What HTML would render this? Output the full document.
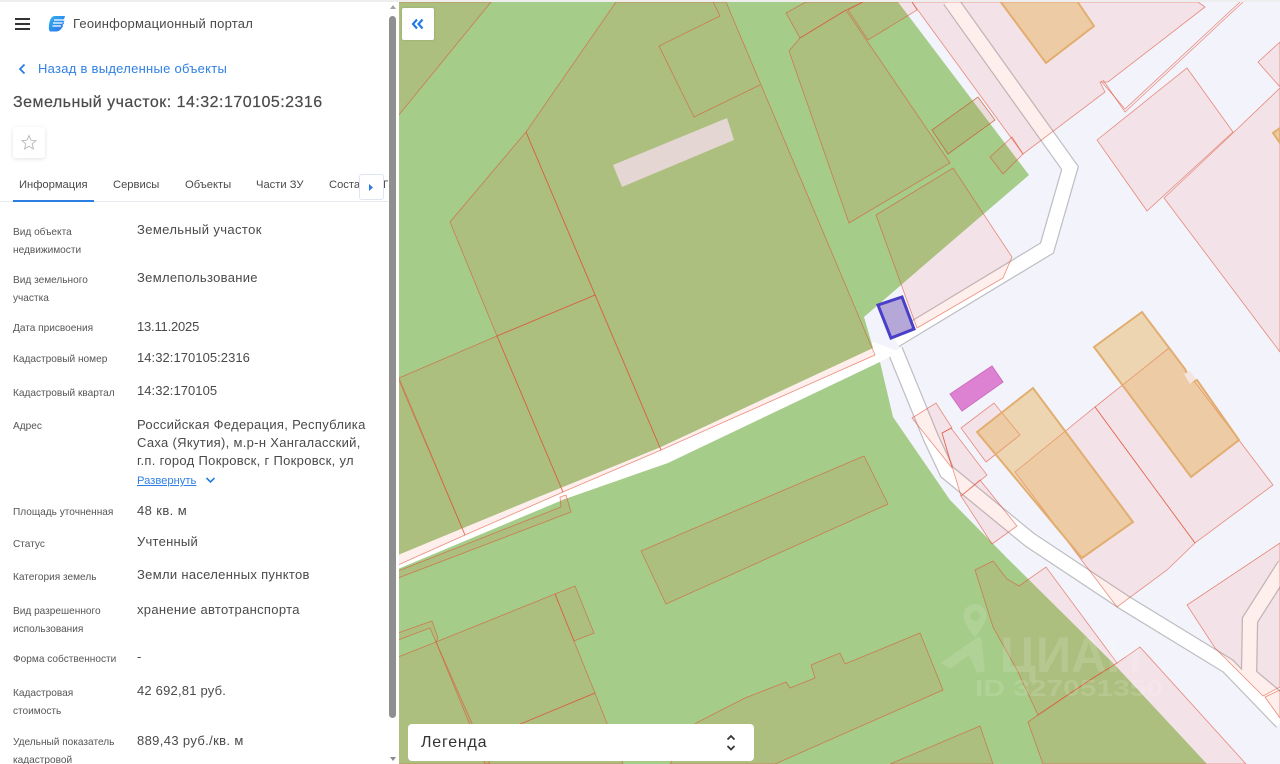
<!DOCTYPE html>
<html lang="ru"><head><meta charset="utf-8"><title>Геоинформационный портал</title>
<style>
html,body{margin:0;padding:0;width:1280px;height:764px;overflow:hidden;background:#fff}
body{font-family:"Liberation Sans","Noto Sans CJK SC",sans-serif;position:relative}
#map{position:absolute;left:0;top:0;filter:blur(.35px)}
#side{position:absolute;left:0;top:0;width:399px;height:764px;background:#fff;overflow:hidden}
#topline{position:absolute;left:0;top:0;width:1280px;height:2px;background:#eeeeee}
.a{position:absolute;white-space:nowrap}
.l{font-size:10.1px;line-height:18px;color:#555;letter-spacing:0;left:13px;margin-top:2px}
.v{font-size:13px;line-height:18px;color:#4a4a4a;letter-spacing:.31px;left:137px;margin-top:1px}
.n{letter-spacing:.05px}
.t{font-size:11.2px;line-height:16px;color:#4a4a4a;top:177px}
</style></head><body>
<svg id="map" width="1280" height="764" viewBox="0 0 1280 764" xmlns="http://www.w3.org/2000/svg">
<rect width="1280" height="764" fill="#f3f3fb"/>
<!-- roads -->
<g fill="none" stroke-linejoin="miter">
<g stroke="#bfbfc4" stroke-width="16.500">
<polyline points="950,0 1070,168 1047,248 895,340"/>
<polyline points="895,350 931,438 947,472 1030,540 1125,603 1228,666 1282,722"/>
<polyline points="1285,565 1250,620 1249,675 1285,705"/>
</g>
<g stroke="#fff" stroke-width="14">
<polyline points="950,0 1070,168 1047,248 895,340"/>
<polyline points="895,350 931,438 947,472 1030,540 1125,603 1228,666 1282,722"/>
<polyline points="1285,565 1250,620 1249,675 1285,705"/>
</g>
</g>
<polygon points="398,548 873,342 900,352 668,463 565,500 398,572" fill="#fff"/>
<!-- green -->
<polygon points="398,2 898,2 1029,175 930,260 864,317 873,348 661,447 531,500 398,555" fill="#a5cc88"/>
<polygon points="398,569 565,499 668,463 880,362 893,417 950,500 1007,558 1113,663 1207,764 398,764" fill="#a5cc88"/>
<!-- parcels -->
<g fill="rgba(240,70,40,.09)" stroke="rgba(224,78,50,.62)" stroke-width=".8" stroke-linejoin="miter">
<polygon points="398,2 491,2 398,116"/>
<polygon points="616,2 726,2 875,355 661,450 526,132"/>
<polyline fill="none" points="713,2 720,16 659,46 694,117 760,85"/>
<polygon points="526,132 450,222 497,336 595,295"/>
<polygon points="497,336 595,295 661,450 563,492"/>
<polygon points="399,378 497,336 563,492 465,535"/>
<polygon points="398,378 465,535 398,565"/>
<polygon points="560,497 566,495 571,512 398,578 398,571 561,507"/>
<polygon points="641,551 864,456 888,504 666,604"/>
<polygon points="436,642 555,594 595,693 477,742"/>
<polygon points="555,594 575,586 594,633 574,641"/>
<polygon points="398,657 436,642 490,764 398,764"/>
<polygon points="398,633 432,621 438,638 436,642 430,628 398,640"/>
<polygon points="477,742 595,693 623,764 485,764"/>
<polygon points="670,764 696,723 745,698 786,682 790,688 815,678 811,665 840,653 845,664 920,633 943,690 775,764"/>
<polygon points="890,764 980,726 993,764"/>
<polygon points="975,570 993,561 1007,579 1019,586 1046,567 1117,663 1090,680 1038,715 1017,670 993,627"/>
<polygon points="1028,722 1038,715 1090,680 1117,663 1140,647 1246,764 1043,764"/>
<polygon points="786,13 806,2 863,2 846,10 800,38"/>
<polygon points="848,10 863,2 912,2 917,10 868,40"/>
<polygon points="789,51 800,38 846,10 950,163 849,223"/>
<polygon points="876,215 953,168 1012,257 1003,278 917,328"/>
<polygon points="932,130 978,97 995,120 948,154" fill="rgba(200,90,40,.14)" stroke="rgba(200,90,50,.8)"/>
<polygon points="990,157 1012,137 1023,154 1003,174"/>
<polygon points="912,2 1198,2 1205,7 1108,82 1100,82 1105,92 1023,154"/>
<polyline fill="none" points="1101,81 1125,109 1240,2"/>
<polyline fill="none" points="1103,80 1125,112 1243,2"/>
<polygon points="1097,140 1187,68 1233,132 1147,211"/>
<polygon points="1164,198 1233,133 1280,88 1280,352"/>
<polygon points="1258,62 1280,42 1280,87"/>
<polygon points="1095,407 1169,348 1273,485 1195,543"/>
<polygon points="1015,472 1095,407 1195,543 1167,570 1117,607"/>
<polygon points="961,428 994,403 1020,435 986,462"/>
<polygon points="912,418 936,403 952,428 942,433 952,468"/>
<polygon points="942,433 951,428 987,475 961,496"/>
<polygon points="961,496 980,480 1017,526 992,544"/>
<polygon points="1187,605 1280,543 1280,687 1263,696 1215,648"/>
<polygon points="1265,697 1280,690 1280,718"/>
</g>
<!-- building strip on parcel -->
<polygon points="613,165 727,118 734,140 622,187" fill="#e4d6d2"/>
<!-- orange buildings -->
<g fill="rgba(229,170,70,.41)" stroke="#e2ae70" stroke-width="2" stroke-linejoin="miter">
<polygon points="1000,1 1077,1 1094,26 1046,63"/>
<polygon points="1094,347 1142,312 1185,369 1191,382 1197,380 1239,440 1191,477"/>
<polygon points="977,432 1033,388 1133,522 1082,558"/>
<polygon points="1273,133 1280,128 1280,143"/>
</g>
<polygon points="1184,374 1190,371 1196,379 1190,384" fill="#f5e5e0"/>
<!-- magenta -->
<polygon points="950,394 992,366 1003,382 962,411" fill="#dd82d2" stroke="#cf6fbf" stroke-width="1"/>
<!-- selected -->
<polygon points="878,305 902,297 914,329 891,338" fill="#b5a8d8" stroke="#4a3fc8" stroke-width="3"/>
<!-- watermark -->
<g fill="rgba(255,255,255,.13)">
<path fill-rule="evenodd" d="M975 604a11.500 11.500 0 0 1 11.500 11.500c0 8-11.500 22-11.500 22s-11.500-14-11.500-22A11.500 11.500 0 0 1 975 604zm0 7a5 5 0 1 0 0 10 5 5 0 0 0 0-10z"/>
<path d="M941 663l37-26h3l4 34-8 2-8-18-19 14z"/>
<text x="1000" y="672" font-family="Liberation Sans,sans-serif" font-size="50" font-weight="700" textLength="142" lengthAdjust="spacingAndGlyphs">ЦИАН</text>
<text x="975" y="696" font-family="Liberation Sans,sans-serif" font-size="23" font-weight="700" textLength="188" lengthAdjust="spacingAndGlyphs">ID 327051350</text>
</g>
</svg>
<div id="topline"></div>

<!-- map controls -->
<div class="a" style="left:402px;top:8px;width:32px;height:32px;background:#fff;border-radius:2px;box-shadow:0 0 2px rgba(0,0,0,.15)">
<svg width="32" height="32" viewBox="0 0 32 32"><path d="M15 11.500L11 16l4 4.500M20.500 11.500L16.500 16l4 4.500" fill="none" stroke="#1f78e6" stroke-width="2.100"/></svg>
</div>
<div class="a" style="left:408px;top:724px;width:346px;height:37px;background:#fff;border-radius:4px">
<span class="a" style="left:13px;top:9px;font-size:16px;line-height:20px;color:#333;letter-spacing:.78px">Легенда</span>
<svg class="a" style="left:316px;top:9px" width="14" height="20" viewBox="0 0 14 20"><path d="M3.500 6.500L7 3l3.500 3.500M3.500 13L7 16.500 10.500 13" fill="none" stroke="#333" stroke-width="1.700"/></svg>
</div>

<!-- sidebar -->
<div id="side">
<div class="a" style="left:0;top:0;width:399px;height:2px;background:#eee"></div>
<svg class="a" style="left:15px;top:18px" width="16" height="13" viewBox="0 0 16 13"><path d="M0 1h15M0 6h15M0 11h15" stroke="#333" stroke-width="2"/></svg>
<svg class="a" style="left:48px;top:15px" width="18" height="18" viewBox="0 0 18 18">
<defs><linearGradient id="g" x1="0" y1="0" x2="1" y2="1"><stop offset="0" stop-color="#2fb4ee"/><stop offset="1" stop-color="#2a6ff0"/></linearGradient></defs>
<path d="M7 1h10l-.5 2-1 1.500 1 1-1 1.500.5 1.500-1.500 1.500.5 1.500-2 2.500c-1 1.500-3 2.500-5 2.500H2C.5 15.500.8 11 1.200 8.500 2 4 4 1 7 1z" fill="url(#g)"/>
<path d="M6 5h10M5 8h9.500M4.500 11h8.500" stroke="#fff" stroke-width="1.300"/>
</svg>
<span class="a" style="left:73px;top:16px;font-size:13px;line-height:16px;color:#4a4a4a;letter-spacing:.22px">Геоинформационный портал</span>
<svg class="a" style="left:17px;top:62px" width="10" height="14" viewBox="0 0 10 14"><path d="M7.500 2.500L3 7l4.500 4.500" fill="none" stroke="#2a7de1" stroke-width="1.800"/></svg>
<span class="a" style="left:38px;top:61px;font-size:13px;line-height:16px;color:#2f80e4;letter-spacing:.27px">Назад в выделенные объекты</span>
<span class="a" style="left:13px;top:93px;font-size:16px;line-height:20px;color:#4a4a4a;letter-spacing:.48px;-webkit-text-stroke:.2px #4a4a4a">Земельный участок: 14:32:170105:2316</span>
<div class="a" style="left:13px;top:127px;width:32px;height:31px;background:#fff;border-radius:3px;box-shadow:0 1px 4px rgba(0,0,0,.12)">
<svg width="32" height="31" viewBox="0 0 32 31"><path d="M16 8.500l2 4.700 5 .4-3.800 3.300 1.200 5-4.400-2.700-4.400 2.700 1.200-5L9 13.600l5-.4z" fill="none" stroke="#bdbdbd" stroke-width="1"/></svg>
</div>
<span class="a t" style="left:19px">Информация</span>
<span class="a t" style="left:113px">Сервисы</span>
<span class="a t" style="left:185px">Объекты</span>
<span class="a t" style="left:256px">Части ЗУ</span>
<span class="a t" style="left:329px">Состав</span>
<span class="a t" style="left:383px;width:5px;overflow:hidden">П</span>
<div class="a" style="left:0;top:201px;width:388px;height:1px;background:#e6e9ee"></div>
<div class="a" style="left:13px;top:200px;width:81px;height:2px;background:#2a7de1"></div>
<div class="a" style="left:359px;top:174px;width:23px;height:24px;background:#fff;border:1px solid #dfe6f2;border-radius:3px">
<svg class="a" style="left:8px;top:8px" width="6" height="9" viewBox="0 0 6 9"><path d="M1 1l4 3.500L1 8z" fill="#2a7de1"/></svg>
</div>

<span class="a l" style="top:222px">Вид объекта</span><span class="a l" style="top:240px">недвижимости</span>
<span class="a v" style="top:220px;letter-spacing:.38px">Земельный участок</span>
<span class="a l" style="top:270px">Вид земельного</span><span class="a l" style="top:288px">участка</span>
<span class="a v" style="top:268px">Землепользование</span>
<span class="a l" style="top:318px">Дата присвоения</span>
<span class="a v" style="top:317px;letter-spacing:-.2px">13.11.2025</span>
<span class="a l" style="top:349px">Кадастровый номер</span>
<span class="a v n" style="top:348px">14:32:170105:2316</span>
<span class="a l" style="top:383px">Кадастровый квартал</span>
<span class="a v n" style="top:381px">14:32:170105</span>
<span class="a l" style="top:416px">Адрес</span>
<span class="a v" style="top:415px">Российская Федерация, Республика</span>
<span class="a v" style="top:433px">Саха (Якутия), м.р-н Хангаласский,</span>
<span class="a v" style="top:451px">г.п. город Покровск, г Покровск, ул</span>
<span class="a" style="left:137px;top:473px;font-size:11.2px;line-height:16px;color:#2f80e4;text-decoration:underline">Развернуть</span>
<svg class="a" style="left:205px;top:476px" width="11" height="9" viewBox="0 0 11 9"><path d="M1.500 2L5.500 6l4-4" fill="none" stroke="#2a7de1" stroke-width="1.600"/></svg>
<span class="a l" style="top:502px">Площадь уточненная</span>
<span class="a v" style="top:501px;letter-spacing:.4px">48 кв. м</span>
<span class="a l" style="top:534px">Статус</span>
<span class="a v" style="top:532px;letter-spacing:.25px">Учтенный</span>
<span class="a l" style="top:567px">Категория земель</span>
<span class="a v" style="top:565px">Земли населенных пунктов</span>
<span class="a l" style="top:601px">Вид разрешенного</span><span class="a l" style="top:619px">использования</span>
<span class="a v" style="top:600px">хранение автотранспорта</span>
<span class="a l" style="top:649px">Форма собственности</span>
<span class="a v" style="top:647px">-</span>
<span class="a l" style="top:683px">Кадастровая</span><span class="a l" style="top:701px">стоимость</span>
<span class="a v" style="top:681px;letter-spacing:.2px">42 692,81 руб.</span>
<span class="a l" style="top:732px">Удельный показатель</span><span class="a l" style="top:750px">кадастровой</span>
<span class="a v" style="top:731px;letter-spacing:.36px">889,43 руб./кв. м</span>

<!-- scrollbar -->
<div class="a" style="left:389px;top:16px;width:7px;height:702px;background:#8f8f8f;border-radius:4px"></div>
<svg class="a" style="left:389px;top:4px" width="8" height="6" viewBox="0 0 8 6"><path d="M4 1l3 4H1z" fill="#a3a3a3"/></svg>
<svg class="a" style="left:389px;top:756px" width="8" height="6" viewBox="0 0 8 6"><path d="M4 5L1 1h6z" fill="#8a8a8a"/></svg>
</div>
</body></html>
